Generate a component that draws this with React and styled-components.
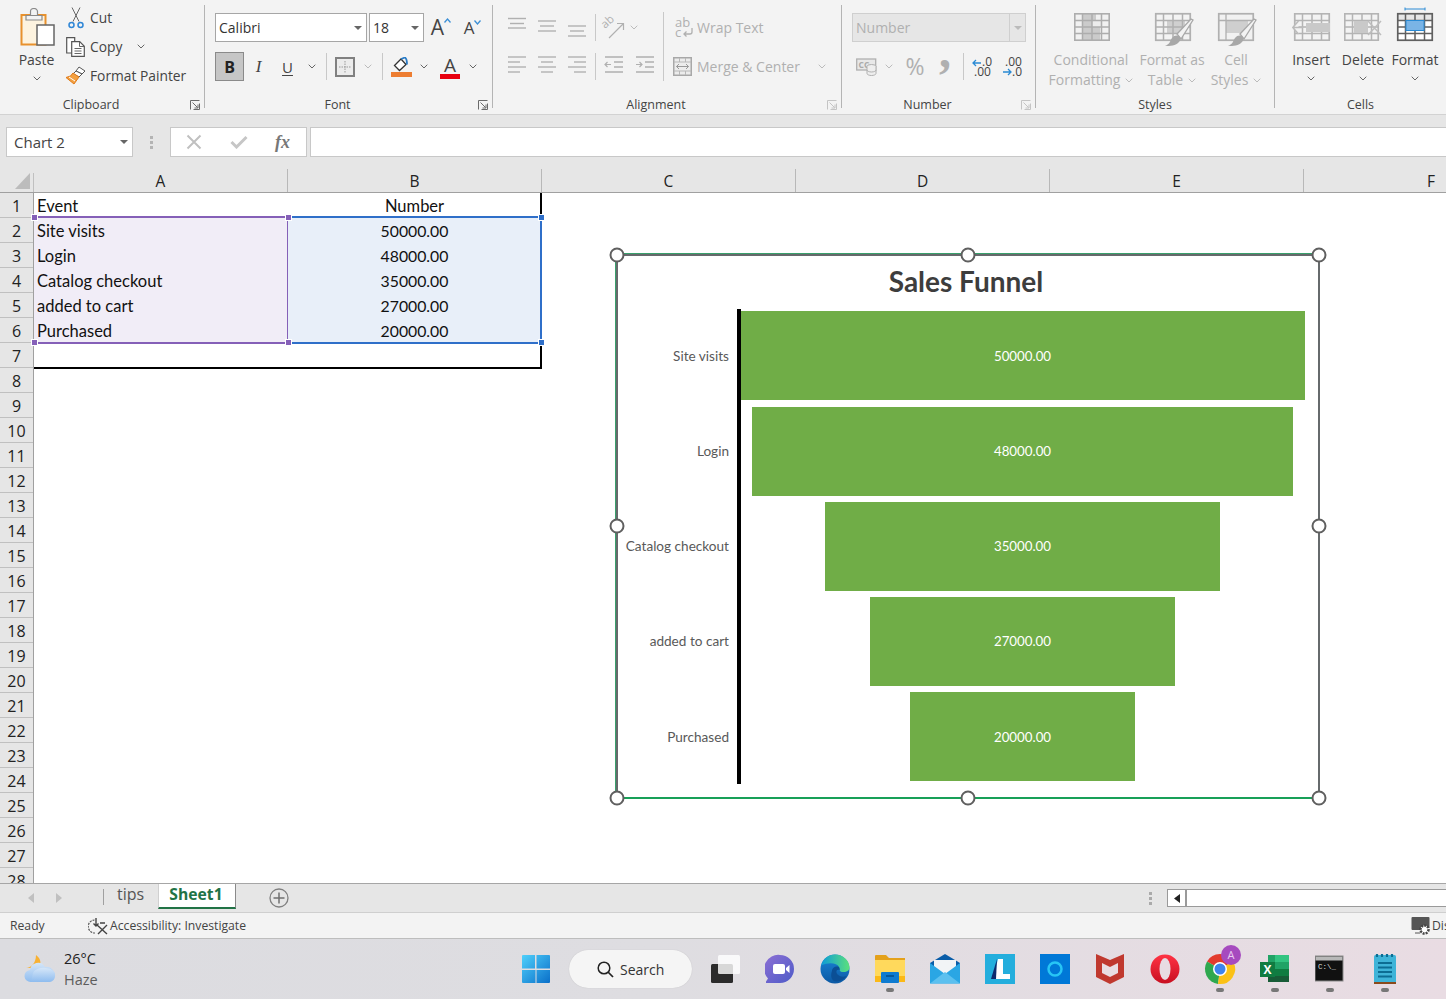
import React from "react";
import styled, { createGlobalStyle } from "styled-components";

const UI = `"Open Sans", "Noto Sans", "Liberation Sans", sans-serif`;
const CELL = `Lato, "Open Sans", "Liberation Sans", sans-serif`;
const OFF = "#b0b0b0";
const ON = "#444";

const Global = createGlobalStyle`
  html, body { margin: 0; padding: 0; background: #fff; }
  * { box-sizing: border-box; }
`;

const Page = styled.div`
  width: 1446px; height: 999px; overflow: hidden;
  display: flex; flex-direction: column; font-family: ${UI}; color: ${ON};
`;

/* ---------- ribbon ---------- */
const Ribbon = styled.div`
  height: 115px; flex: none; display: flex; background: #f3f3f3;
  border-bottom: 1px solid #d2d2d2;
`;
const Group = styled.section`
  width: ${p => p.$w}px; flex: none; display: flex; flex-direction: column;
`;
const GroupSep = styled.div`
  width: 1px; flex: none; margin: 5px 0 6px; background: #b4b4b4;
`;
const GroupBody = styled.div`
  height: 94px; display: flex; padding-left: ${p => p.$pl || 0}px;
`;
const GroupFooter = styled.div`
  height: 20px; display: flex; align-items: center; padding-right: ${p => (p.$flush ? 0 : 4)}px; padding-top: 1px;
`;
const GroupLabel = styled.div`
  flex: 1; text-align: center; font-size: 12.5px; line-height: 20px; color: #444;
`;
const LauncherBox = styled.div`
  width: 10px; height: 10px; margin-left: 8px; display: flex;
`;
const BigButton = styled.div`
  width: ${p => p.$w}px; flex: none; display: flex; flex-direction: column; align-items: center;
`;
const IconSlot = styled.div`
  height: 50px; padding-top: 4px; padding-left: ${p => p.$pl || 0}px; display: flex; align-items: center; justify-content: center;
`;
const BigLabel = styled.div`
  font-size: 14px; line-height: 20px; white-space: nowrap;
  color: ${p => (p.$off ? OFF : ON)};
  display: flex; align-items: center; gap: 5px;
`;
const ChevSlot = styled.div`
  height: 16px; display: flex; align-items: center;
`;
const SmallColumn = styled.div`
  margin-left: 12px; padding-top: 3px; display: flex; flex-direction: column;
`;
const SmallRow = styled.div`
  height: 29px; display: flex; align-items: center; font-size: 13.8px; white-space: nowrap;
`;
const SmallIcon = styled.div`
  width: 24px; flex: none; display: flex; justify-content: ${p => (p.$center ? "center" : "flex-start")};
  padding-right: ${p => (p.$center ? "4px" : 0)};
`;
const ChevGap = styled.div`
  margin-left: ${p => p.$ml}px; display: flex;
`;
const ToolStack = styled.div`
  padding-top: 13px; display: flex; flex-direction: column; gap: 10px;
  width: ${p => (p.$w ? `${p.$w}px` : "auto")}; flex: none;
`;
const ToolRow = styled.div`
  height: 29px; display: flex; align-items: center;
`;
const Tool = styled.div`
  width: ${p => p.$w}px; height: 29px; flex: none; display: flex; align-items: center; justify-content: center;
  color: ${p => (p.$off ? OFF : ON)};
`;
const Sep = styled.div`
  width: ${p => p.$w}px; height: 27px; flex: none; display: flex; justify-content: center;
  &::before { content: ""; width: 1px; background: #c8c8c8; }
`;
const TallSep = styled.div`
  width: 1px; height: 69px; margin-top: 12px; background: #c8c8c8; flex: none;
`;
const Select = styled.div`
  width: ${p => p.$w}px; height: 29px; flex: none; display: flex; align-items: center;
  background: ${p => (p.$off ? "#e6e6e6" : "#fff")};
  border: 1px solid ${p => (p.$off ? "#cfcfcf" : "#a6a6a6")};
  margin-left: ${p => p.$ml || 0}px; padding-left: 2px;
  font-size: 14px; color: ${p => (p.$off ? "#b0b0b0" : "#333")};
`;
const SelectText = styled.span` flex: 1; padding-left: 1px; `;
const CaretBox = styled.span`
  width: 16px; height: 100%; display: flex; align-items: center; justify-content: center;
  border-left: ${p => (p.$divided ? "1px solid #cfcfcf" : "0")};
`;
const BoldButton = styled(Tool)`
  background: #c6c6c6; border: 1px solid #8a8a8a; color: #222;
  font: 700 16px ${UI};
`;
const ItalicGlyph = styled.span` font: italic 400 17px "Liberation Serif", serif; color: #444; `;
const UnderGlyph = styled.span`
  font: 400 15px ${UI}; color: #444; text-decoration: underline; text-underline-offset: 2px;
`;
const SizeGlyph = styled.span`
  font-family: ${UI}; font-size: ${p => p.$s}px; line-height: 1; color: #444; position: relative;
`;
const MarkGlyph = styled.span`
  font-size: ${p => p.$s}px; line-height: 1; color: ${OFF}; font-family: ${UI};
`;
const CommaGlyph = styled.span`
  font: 700 48px/29px "Liberation Serif", serif; color: ${OFF}; height: 29px; transform: translateY(-16px);
`;
const TextTool = styled.div`
  height: 29px; display: flex; align-items: center; font-size: 14px; white-space: nowrap; color: ${OFF};
  padding-left: ${p => p.$pl}px; gap: ${p => p.$gap}px;
`;

/* ---------- formula bar ---------- */
const FormulaBar = styled.div`
  height: 50px; flex: none; background: #e6e6e6; padding: 12px 0 8px 6px; display: flex;
`;
const NameBox = styled.div`
  width: 127px; height: 30px; background: #fff; border: 1px solid #c8c8c8; display: flex; align-items: center;
  padding-left: 6px; font-size: 15px; color: #444; flex: none;
`;
const GripDots = styled.div`
  width: ${p => p.$w}px; flex: none; display: flex; flex-direction: column; align-items: center; justify-content: center; gap: 2px;
  & > i { width: 3px; height: 3px; background: ${p => p.$c || "#b4b4b4"}; display: block; }
`;
const FxBox = styled.div`
  width: 137px; height: 30px; background: #fff; border: 1px solid #c8c8c8; display: flex; align-items: center; flex: none;
`;
const FxSlot = styled.div`
  width: 45px; flex: none; display: flex; justify-content: center; align-items: center;
`;
const FxGlyph = styled.span`
  font: italic 700 18px "Liberation Serif", serif; color: #777; margin-left: -2px;
`;
const FormulaInput = styled.div`
  flex: 1; height: 30px; margin-left: 3px; background: #fff; border: 1px solid #c8c8c8; border-right: 0;
`;

/* ---------- sheet ---------- */
const ColHeaders = styled.div`
  height: 28px; flex: none; display: flex; background: #e6e6e6; border-bottom: 1px solid #a0a0a0; padding-top: 4px;
`;
const Corner = styled.div`
  width: 34px; flex: none; margin-top: 4px; padding: 0 0 0 15px; display: flex; align-items: flex-start;
  border-right: 1px solid #c0c0c0;
`;
const ColHead = styled.div`
  width: ${p => (p.$w ? `${p.$w}px` : "auto")}; flex: ${p => (p.$w ? "none" : 1)};
  height: 23px; text-align: center; line-height: 25px; font-size: 15.5px; color: #222;
  border-right: ${p => (p.$w ? "1px solid #b8b8b8" : 0)};
`;
const LastColHead = styled(ColHead)` text-align: left; padding-left: 123px; `;
const SheetBody = styled.div`
  flex: 1; min-height: 0; display: flex; position: relative; overflow: hidden; background: #fff;
`;
const RowHeads = styled.div`
  width: 34px; flex: none; background: #e6e6e6; border-right: 1px solid #a0a0a0;
`;
const RowHead = styled.div`
  height: 25px; text-align: center; line-height: 27px; font-size: 16px; color: #222;
  border-bottom: 1px solid #c0c0c0;
`;
const Cells = styled.div`
  flex: none; align-self: flex-start; display: grid; grid-template-columns: 254px 252px;
  grid-template-rows: 25px 125px 24px;
  border-right: 2px solid #000; border-bottom: 2px solid #000;
`;
const Cell = styled.div`
  height: 25px; line-height: 26px; font-family: ${CELL}; font-size: 16.5px; color: #111; white-space: nowrap;
  padding-left: 3px;
`;
const NumCell = styled(Cell)`
  padding-left: 1px; text-align: center; font-size: ${p => (p.$head ? "16.5px" : "15.8px")};
`;
const Range = styled.div`
  position: relative; margin: -2px ${p => (p.$c === "a" ? "-1px" : "-2px")} -1px 0;
  border: 2px solid ${p => (p.$c === "a" ? "#8560b8" : "#2f6fc9")};
  border-left-width: 0;
  background: ${p => (p.$c === "a" ? "#f1edf7" : "#e8eff9")};
`;
const RangeHandle = styled.i`
  position: absolute; width: 5px; height: 5px; display: block; z-index: 1;
  background: ${p => (p.$c === "a" ? "#8560b8" : "#2f6fc9")};
  ${p => (p.$top ? "top: -3px;" : "bottom: -3px;")}
  ${p => (p.$left ? "left: -2px;" : "right: -4px;")}
  outline: 1px solid #fff;
`;

/* ---------- chart ---------- */
const ChartFrame = styled.div`
  position: absolute; left: 616px; top: 61px; width: 704px; height: 545px; background: #fff;
  border: 2px solid #666a6c; border-bottom-color: #18a058;
  box-shadow: 0 -1px 0 #39a06c, -1px 0 0 #39a06c;
  display: flex; flex-direction: column;
`;
const ChartTitle = styled.div`
  height: 53px; line-height: 50px; text-align: center; padding-right: 4px; flex: none;
  font-family: ${CELL}; font-weight: 700; font-size: 28px; color: #3d3d3d;
`;
const Plot = styled.div` display: flex; `;
const AxisLabels = styled.div`
  width: 111px; margin-right: 8px; padding: 2.4px 0 3px; display: flex; flex-direction: column; gap: 6.2px; flex: none;
`;
const AxisLabel = styled.div`
  height: 89px; display: flex; align-items: center; justify-content: flex-end;
  font-family: ${CELL}; font-size: 13.6px; color: #595959; white-space: nowrap;
`;
const Bars = styled.div`
  width: 568px; border-left: 4px solid #000; padding: 2.4px 0 3px; display: flex; flex-direction: column; gap: 6.2px;
`;
const BarRow = styled.div`
  height: 89px; display: flex; justify-content: center; margin: 0 .5px 0 -.5px;
`;
const Bar = styled.div`
  height: 100%; background: #70ad47; display: flex; align-items: center; justify-content: center;
  font-family: ${CELL}; font-size: 13.3px; color: #fff;
`;
const Handle = styled.i`
  position: absolute; width: 15px; height: 15px; border-radius: 50%; background: #fff; border: 2px solid #5f5f5f;
  transform: translate(-50%, -50%); display: block;
  left: ${p => p.$x}px; top: ${p => p.$y}px;
`;

/* ---------- tabs + status ---------- */
const TabBar = styled.div`
  height: 29px; flex: none; background: #e6e6e6; border-top: 1px solid #a6a6a6; display: flex; align-items: flex-start;
`;
const TabNav = styled.div`
  width: 103px; flex: none; height: 28px; padding-left: 17px; display: flex; align-items: center;
`;
const NavSlot = styled.div` width: 28px; display: flex; justify-content: center; `;
const TipsTab = styled.div`
  width: 55px; flex: none; height: 16px; margin-top: 5px; border-left: 1px solid #a0a0a0; padding-right: 1px;
  text-align: center; font-size: 16px; line-height: 10px; color: #555;
`;
const ActiveTab = styled.div`
  width: 78px; height: 25px; flex: none; background: #fff; border-right: 1px solid #8a8a8a; border-left: 1px solid #d0d0d0;
  border-bottom: 2px solid #217346; text-align: center; font-size: 15.7px; font-weight: 700; color: #217346; line-height: 21px;
  padding-right: 2px;
`;
const AddSlot = styled.div`
  width: 86px; flex: none; height: 28px; display: flex; align-items: center; justify-content: center;
`;
const TabSpacer = styled.div` flex: 1; `;
const ScrollWrap = styled.div`
  display: flex; align-items: center; height: 28px; flex: none;
`;
const ScrollTrack = styled.div`
  width: 279px; height: 18px; background: #fff; border: 1px solid #9a9a9a; border-right: 0; display: flex;
`;
const ScrollBtn = styled.div`
  width: 19px; border-right: 2px solid #9a9a9a; display: flex; align-items: center; justify-content: center;
`;
const StatusBar = styled.div`
  height: 27px; flex: none; background: #f3f3f3; border-top: 1px solid #cfcfcf; border-bottom: 1px solid #bdbdbd;
  display: flex; align-items: center; padding-left: 10px; font-size: 12.2px; color: #444; white-space: nowrap;
`;
const StatusReady = styled.div` width: 78px; flex: none; `;
const StatusItem = styled.div` display: flex; align-items: center; gap: 2px; `;
const StatusRight = styled.div`
  margin-left: auto; display: flex; align-items: center; gap: 1px; width: 35px; flex: none;
  & > svg { flex: none; }
`;

/* ---------- taskbar ---------- */
const Taskbar = styled.div`
  height: 60px; flex: none; display: flex; align-items: center;
  background: linear-gradient(90deg, #dcdce0 0%, #dedde1 45%, #e9dce3 100%);
`;
const Weather = styled.div`
  width: 521px; flex: none; padding-left: 24px; display: flex; align-items: center; gap: 8px;
`;
const WeatherText = styled.div`
  font-size: 14.5px; line-height: 21px; color: #222;
  & > small { display: block; font-size: 14.5px; color: #5c5c5c; }
`;
const SearchPill = styled.div`
  width: 123px; height: 38px; margin: 0 5px 0 18px; border-radius: 19px; background: #f5f5f5; display: flex; align-items: center; gap: 6px;
  padding-left: 28px; font-size: 14px; color: #333; box-shadow: 0 0 1px rgba(0,0,0,.18); flex: none;
`;
const TaskSlot = styled.div`
  position: relative; width: 55px; height: 60px; flex: none; display: flex; align-items: center; justify-content: center;
`;
const RunDot = styled.i`
  position: absolute; left: 50%; bottom: 7px; width: 8px; height: 4px; margin-left: -4px; border-radius: 2px; background: #777; display: block;
`;
const FreeSvg = styled.svg` overflow: visible; display: block; `;

/* ---------- icon drawings ---------- */
const Chev = ({ c = "#666" }) => (
  <svg width="8" height="5" viewBox="0 0 8 5"><path d="M.7.7 4 4 7.3.7" fill="none" stroke={c} /></svg>
);
const Caret = ({ c = "#666" }) => (
  <svg width="8" height="4" viewBox="0 0 8 4"><path d="M0 0h8L4 4z" fill={c} /></svg>
);
const Launcher = ({ off }) => {
  const c = off ? "#c4c4c4" : "#6a6a6a";
  return (
    <LauncherBox>
      <svg width="10" height="10" viewBox="0 0 10 10">
        <path d="M.5 9.5V.5h9M9.5 3.5v6h-6" fill="none" stroke={c} />
        <path d="M2.5 2.5l5 5M8 4.5V8H4.5" fill="none" stroke={c} />
      </svg>
    </LauncherBox>
  );
};
const PasteIcon = () => (
  <svg width="36" height="38" viewBox="0 0 36 38">
    <rect x="2.5" y="7" width="24" height="29.5" fill="#fdf3df" stroke="#e8912d" strokeWidth="2" />
    <path d="M7 7.500h16V12H7zM11.500 7V3.500a3.500 3 0 0 1 7 0V7" fill="#f3f3f3" stroke="#8a8a8a" strokeWidth="1.200" />
    <rect x="18" y="17" width="17" height="20" fill="#fff" stroke="#666" strokeWidth="1.500" />
  </svg>
);
const CutIcon = () => (
  <svg width="16" height="22" viewBox="0 0 16 22">
    <path d="M4 .5l7 14M12 .5L5 14.5" stroke="#666" fill="none" />
    <circle cx="3.500" cy="18" r="2.500" fill="none" stroke="#2e86d6" strokeWidth="1.500" />
    <circle cx="12.500" cy="18" r="2.500" fill="none" stroke="#2e86d6" strokeWidth="1.500" />
  </svg>
);
const CopyIcon = () => (
  <svg width="20" height="20" viewBox="0 0 20 20">
    <path d="M7 16H.7V.7h8V4" fill="#fff" stroke="#555" strokeWidth="1.200" />
    <path d="M5.700 4.700h8l4.600 4.600v10H5.700z" fill="#fff" stroke="#555" strokeWidth="1.200" />
    <path d="M13.500 5v4.500H18M8.500 11.500h7M8.500 14h7M8.500 16.500h7" fill="none" stroke="#666" />
  </svg>
);
const PainterIcon = () => (
  <svg width="20" height="19" viewBox="0 0 20 19">
    <path d="M13 1l6 4-3 3-6-3z" fill="#fff" stroke="#555" />
    <path d="M10 5l6 3-3 3-6-3z" fill="#fff" stroke="#555" />
    <path d="M7 7l6 4-5 7-8-6.500 4.500-1.500z" fill="#f3a040" stroke="#e07b1a" />
    <path d="M3 11l6 4" stroke="#fff" />
  </svg>
);
const GrowCaret = ({ dir, c }) => (
  <svg width="7" height="5" viewBox="0 0 7 5">
    <path d={dir === "up" ? "M.5 4.500 3.500 1l3 3.500" : "M.5.5 3.500 4l3-3.500"} fill="none" stroke={c} strokeWidth="1.300" />
  </svg>
);
const CaretHolder = styled.span` position: absolute; left: 100%; top: 1px; display: flex; margin-left: 0; `;
const BordersIcon = () => (
  <svg width="20" height="20" viewBox="0 0 20 20">
    <rect x="1" y="1" width="18" height="18" fill="#ececec" stroke="#808080" strokeWidth="2" />
    <path d="M10 4v12M4 10h12" stroke="#999" strokeDasharray="1.500 1" />
  </svg>
);
const FillIcon = () => (
  <svg width="21" height="20" viewBox="0 0 21 20">
    <path d="M3.500 8.500 10 2l5 5.500-6.500 6z" fill="#fff" stroke="#333" strokeWidth="1.300" />
    <path d="M10 2l4-1.500c1.500 1 2 3.500 2 7" fill="none" stroke="#2a7cc7" strokeWidth="1.800" />
    <rect x="0" y="15" width="21" height="5" fill="#ed7d31" />
  </svg>
);
const ColorBar = styled.span`
  display: block; width: 20px; height: 5px; background: #e8000f; margin-top: -1px;
`;
const ColorWrap = styled.span`
  display: flex; flex-direction: column; align-items: center; font: 400 19px/20px ${UI}; color: #444;
`;
const AlignIcon = ({ lines }) => (
  <svg width="20" height="29" viewBox="0 0 20 29">
    {lines.map(([a, b, y], i) => (
      <path key={i} d={`M${a} ${y}H${b}`} stroke={OFF} strokeWidth="1.400" />
    ))}
  </svg>
);
const L4 = (w1, w2, mode) => [5, 10, 15, 20].map((y, i) => {
  const w = i % 2 ? w2 : w1;
  if (mode === "l") return [1, 1 + w, y];
  if (mode === "r") return [19 - w, 19, y];
  return [10 - w / 2, 10 + w / 2, y];
});
const OrientIcon = () => (
  <FreeSvg width="22" height="22" viewBox="0 0 22 22">
    <text fontSize="11.500" fill={OFF} fontFamily="Open Sans" transform="translate(2 12) rotate(-42)">ab</text>
    <path d="M6 21 20 7M14 6.500h6.500V13" fill="none" stroke={OFF} strokeWidth="1.200" />
  </FreeSvg>
);
const IndentIcon = ({ dir }) => (
  <svg width="20" height="29" viewBox="0 0 20 29">
    <path d="M1 5h18M1 20h18M10 10h9M10 15h9" stroke={OFF} strokeWidth="1.400" />
    <path d={dir === "in" ? "M1 12.500h6M4.500 10l2.500 2.500-2.500 2.500" : "M7 12.500H1M3.500 10 1 12.500 3.500 15"} fill="none" stroke={OFF} strokeWidth="1.200" />
  </svg>
);
const WrapIcon = () => (
  <FreeSvg width="18" height="22" viewBox="0 0 18 22">
    <text x="0" y="10" fontSize="13" fill={OFF} fontFamily="Open Sans">ab</text>
    <text x="0" y="20" fontSize="13" fill={OFF} fontFamily="Open Sans">c</text>
    <path d="M17 11v4a2 2 0 0 1-2 2H9M11.500 14.500 9 17l2.500 2.500" fill="none" stroke={OFF} strokeWidth="1.300" />
  </FreeSvg>
);
const MergeIcon = () => (
  <svg width="19" height="19" viewBox="0 0 19 19">
    <rect x=".75" y=".75" width="17.500" height="17.500" fill="#ececec" stroke="#a8a8a8" strokeWidth="1.500" />
    <path d="M6.500 1v4M12.500 1v4M6.500 14v4M12.500 14v4M1 5h17M1 14h17" stroke="#b8b8b8" />
    <path d="M3.500 9.500h12M6 7 3.500 9.500 6 12M13 7l2.500 2.500L13 12" fill="none" stroke="#999" />
  </svg>
);
const CurrencyIcon = () => (
  <FreeSvg width="21" height="18" viewBox="0 0 21 18">
    <rect x=".7" y="1" width="19" height="11" fill="#e8e8e8" stroke={OFF} strokeWidth="1.300" />
    <text x="2.500" y="10" fontSize="8.500" fontWeight="700" fill="#aaa" fontFamily="Open Sans">CC</text>
    <ellipse cx="15.500" cy="8.500" rx="4.500" ry="2" fill="#eee" stroke={OFF} />
    <path d="M11 8.500v7c0 1 2 2 4.500 2s4.500-1 4.500-2v-7M11 12c0 1 2 2 4.500 2s4.500-1 4.500-2" fill="#eee" stroke={OFF} />
  </FreeSvg>
);
const DecimalIcon = ({ inc }) => (
  <FreeSvg width="22" height="20" viewBox="0 0 22 20">
    {inc ? (
      <g>
        <path d="M9 6H1M4 3 1 6l3 3" fill="none" stroke="#2a8ad4" strokeWidth="1.300" />
        <text x="10" y="9" fontSize="12" fill="#444" fontFamily="Open Sans">.0</text>
        <text x="2" y="19" fontSize="12" fill="#444" fontFamily="Open Sans">.00</text>
      </g>
    ) : (
      <g>
        <text x="3" y="9" fontSize="12" fill="#444" fontFamily="Open Sans">.00</text>
        <path d="M1 15h8M6 12l3 3-3 3" fill="none" stroke="#2a8ad4" strokeWidth="1.300" />
        <text x="10" y="19" fontSize="12" fill="#444" fontFamily="Open Sans">.0</text>
      </g>
    )}
  </FreeSvg>
);
const GridFrame = ({ c, w = 36, h = 28 }) => (
  <g fill="none" stroke={c} strokeWidth="1.500">
    <rect x=".75" y=".75" width={w - 1.5} height={h - 1.5} strokeWidth="1.700" />
    <path d={`M1 7.500H${w - 1}M1 14H${w - 1}M1 20.500H${w - 1}M8.500 1V${h - 1}M18 1V${h - 1}M27.500 1V${h - 1}`} />
  </g>
);
const Brush = ({ c = "#a8a8a8" }) => (
  <g>
    <path d="M22 21 36 6l2 1-12 19z" fill="#f3f3f3" stroke={c} strokeWidth="1.300" />
    <path d="M10 33c5 0 11 0 14-4 2-2 2-4 0-6-2-1-5-1-7 2-2 3-2 6-7 8z" fill={c} />
  </g>
);
const CondIcon = () => (
  <svg width="36" height="28" viewBox="0 0 36 28">
    <rect x="1" y="1" width="34" height="26" fill="#f1f1f1" />
    <path d="M8 1h14v6.500H8zM8 7.500h10V14H8zM8 14h18v6.500H8zM8 20.500h18V27H8z" fill="#cbcbcb" />
    <path d="M18 7.500h9.500V14H18z" fill="#ececec" />
    <GridFrame c="#adadad" />
  </svg>
);
const TableStyleIcon = () => (
  <FreeSvg width="36" height="28" viewBox="0 0 36 28">
    <path d="M12 7.500h18V20H12z" fill="#cfcfcf" />
    <GridFrame c="#b0b0b0" />
    <Brush />
  </FreeSvg>
);
const CellStyleIcon = () => (
  <FreeSvg width="36" height="28" viewBox="0 0 36 28">
    <rect x="1" y="1" width="34" height="26" fill="#f1f1f1" />
    <path d="M8 7.500h22V20H8z" fill="#cfcfcf" />
    <rect x=".75" y=".75" width="34.500" height="26.500" fill="none" stroke="#b0b0b0" strokeWidth="1.700" />
    <path d="M1 7.500h34M8 1v26" stroke="#b0b0b0" strokeWidth="1.300" fill="none" />
    <Brush />
  </FreeSvg>
);
const InsertIcon = () => (
  <svg width="39" height="28" viewBox="0 0 39 28">
    <g transform="translate(2 0)"><GridFrame c="#b4b4b4" /></g>
    <path d="M14 10h24v9H14z" fill="#c9c9c9" />
    <path d="M11 14.500H1M6.500 8 .8 14.500 6.500 21" fill="#f3f3f3" stroke="#bbb" strokeWidth="1.500" />
  </svg>
);
const DeleteIcon = () => (
  <svg width="38" height="28" viewBox="0 0 38 28">
    <GridFrame c="#b4b4b4" w={35} />
    <path d="M10 8h14v12H10z" fill="#c9c9c9" />
    <path d="M24 8l13 14M37 8 24 22" stroke="#bdbdbd" strokeWidth="1.500" fill="none" />
  </svg>
);
const FormatIcon = () => (
  <FreeSvg width="36" height="28" viewBox="0 0 36 28">
    <path d="M8 -4h20M8 -5.500v3M28 -5.500v3" stroke="#2a8ad4" fill="none" />
    <rect x="1" y="1" width="34" height="26" fill="#fff" />
    <path d="M1 1h34v6.500H1z" fill="#e6e6e6" />
    <GridFrame c="#606060" />
    <rect x="9" y="7.500" width="18" height="10" fill="#7ab4e6" stroke="#2a8ad4" />
  </FreeSvg>
);
const CrossIcon = () => (
  <svg width="16" height="16" viewBox="0 0 16 16"><path d="M1.500 1.500l13 13M14.500 1.500l-13 13" stroke="#c0c0c0" strokeWidth="2" /></svg>
);
const CheckIcon = () => (
  <svg width="18" height="14" viewBox="0 0 18 14"><path d="M1.500 7 6.500 12 16.500 2" fill="none" stroke="#c6c6c6" strokeWidth="3" /></svg>
);
const CornerIcon = () => (
  <svg width="15" height="16" viewBox="0 0 15 16"><path d="M15 0v16H0z" fill="#bcbcbc" /></svg>
);
const NavArrow = ({ left }) => (
  <svg width="6" height="10" viewBox="0 0 6 10"><path d={left ? "M6 0v10L0 5z" : "M0 0v10l6-5z"} fill="#c0c0c0" /></svg>
);
const PlusCircle = () => (
  <svg width="20" height="20" viewBox="0 0 20 20">
    <circle cx="10" cy="10" r="9" fill="none" stroke="#808080" strokeWidth="1.300" />
    <path d="M10 4.500v11M4.500 10h11" stroke="#707070" strokeWidth="1.500" />
  </svg>
);
const A11yIcon = () => (
  <svg width="20" height="18" viewBox="0 0 20 18">
    <path d="M6.500 3A6.500 6.500 0 0 0 7 16" fill="none" stroke="#555" strokeDasharray="2 1" strokeWidth="1.200" />
    <path d="M8 1v8M5.500 6.500 8 9l2.500-2.500M9 8l10 9M19 8 10 17M12 6h5" stroke="#444" strokeWidth="1.400" fill="none" />
  </svg>
);
const DisplayIcon = () => (
  <svg width="20" height="20" viewBox="0 0 20 20">
    <path d="M1.500 1h16a1 1 0 0 1 1 1v10H10v2H1.500a1 1 0 0 1-1-1V2a1 1 0 0 1 1-1z" fill="#555" />
    <circle cx="13.500" cy="13.500" r="4" fill="#fff" stroke="#444" strokeWidth="2.500" strokeDasharray="2 1" />
    <path d="M4 17h5" stroke="#555" />
  </svg>
);
const WeatherIcon = () => (
  <svg width="32" height="30" viewBox="0 0 32 30">
    <defs>
      <linearGradient id="cl" x1="0" y1="0" x2="0" y2="1"><stop offset="0" stopColor="#d5e6f8" /><stop offset="1" stopColor="#8ebcef" /></linearGradient>
    </defs>
    <path d="M12 1c4 3 6 7 3 13H2c5 0 10-5 10-13z" fill="#f8b133" />
    <path d="M7 28a6 6 0 0 1-1-12 8 8 0 0 1 15-3 6.500 7 0 0 1 4 15z" fill="url(#cl)" />
    <path d="M9 19a9 5 0 0 1 22 2 6 6 0 0 1-6 7H7z" fill="url(#cl)" />
  </svg>
);
const WinIcon = () => (
  <svg width="30" height="30" viewBox="0 0 30 30">
    <defs>
      <linearGradient id="w" x1="0" y1="0" x2="1" y2="1"><stop offset="0" stopColor="#4fd0fb" /><stop offset="1" stopColor="#0a6fc9" /></linearGradient>
    </defs>
    <path d="M1 2a1 1 0 0 1 1-1h12v13.500H1zM15.500 1H28a1 1 0 0 1 1 1v12.500H15.500zM1 16h13.500v13H2a1 1 0 0 1-1-1zM15.500 16H29v12a1 1 0 0 1-1 1H15.500z" fill="url(#w)" />
  </svg>
);
const SearchIcon = () => (
  <svg width="17" height="17" viewBox="0 0 17 17"><circle cx="7" cy="7" r="5.800" fill="none" stroke="#222" strokeWidth="1.500" /><path d="M11 11l5 5" stroke="#222" strokeWidth="1.700" /></svg>
);
const TaskViewIcon = () => (
  <svg width="30" height="30" viewBox="0 0 30 30">
    <rect x="1" y="10" width="22" height="19" rx="1.500" fill="#2b2b2b" />
    <rect x="8" y="1" width="22" height="19" rx="1.500" fill="#fff" fillOpacity=".82" />
  </svg>
);
const MeetIcon = () => (
  <svg width="30" height="30" viewBox="0 0 30 30">
    <defs><linearGradient id="mt" x1="0" y1="0" x2="1" y2="1"><stop offset="0" stopColor="#8c6fd4" /><stop offset="1" stopColor="#4e5bc8" /></linearGradient></defs>
    <path d="M15 1a14 14 0 0 1 0 28H1v-1.500l2-3A14 14 0 0 1 15 1z" fill="url(#mt)" />
    <rect x="8" y="10" width="12" height="10" rx="2" fill="#fff" />
    <path d="M21 14l3.500-3v8L21 16z" fill="#fff" />
  </svg>
);
const EdgeIcon = () => (
  <svg width="30" height="30" viewBox="0 0 30 30">
    <defs>
      <linearGradient id="e1" x1="0" y1="0" x2="1" y2="0"><stop offset="0" stopColor="#0d9bd8" /><stop offset="1" stopColor="#5be07c" /></linearGradient>
      <linearGradient id="e2" x1="0" y1="0" x2="0" y2="1"><stop offset="0" stopColor="#1b86d8" /><stop offset="1" stopColor="#0c59a4" /></linearGradient>
    </defs>
    <circle cx="15" cy="15" r="14.500" fill="url(#e2)" />
    <path d="M1 12C3 4 9 .500 15 .500c8 0 14.500 6 14.500 13 0 3-3 5-7.500 4.500-3-.5-2-3-3-5-2-4-10-5-18-1.500z" fill="url(#e1)" />
    <path d="M12 17c0-3 3-5 6-4.500 1.500.3 1.500 2 1.800 3.500-3-1-4 1-3 3.500 1.500 3 6 4 10 2.500-3 4-8 6.500-13 5-3-2-3-7-1.800-10z" fill="#0b4f95" />
  </svg>
);
const FolderIcon = () => (
  <svg width="30" height="30" viewBox="0 0 30 30">
    <path d="M0 2a1 1 0 0 1 1-1h10l3 3h16v6H0z" fill="#e4a11b" />
    <path d="M0 6h30v22H0z" fill="#ffd95c" />
    <path d="M0 22h30v6H0z" fill="#fbb917" />
    <rect x="6" y="18" width="18" height="11" rx="1" fill="#0f7bd0" />
    <path d="M11 22h8" stroke="#054d8a" strokeWidth="1.500" />
  </svg>
);
const MailIcon = () => (
  <svg width="30" height="30" viewBox="0 0 30 30">
    <path d="M0 9 15 0l15 9v5H0z" fill="#0a5da8" />
    <path d="M4 6h22v14H4z" fill="#f2f4f6" />
    <path d="M0 9l15 11L30 9v20.500H0z" fill="#2aa6e4" />
    <path d="M0 29.500 15 18l15 11.500z" fill="#5cc0ef" />
  </svg>
);
const LIcon = () => (
  <svg width="30" height="30" viewBox="0 0 30 30">
    <rect width="30" height="30" fill="#24aedd" />
    <path d="M13 5h5v15h7v5H8z" fill="#fff" />
    <path d="M12 5 6 25h5z" fill="#0d2a6e" />
  </svg>
);
const AlexaIcon = () => (
  <svg width="30" height="30" viewBox="0 0 30 30">
    <rect width="30" height="30" fill="#0078d7" />
    <circle cx="15" cy="15" r="6.500" fill="none" stroke="#27c5f5" strokeWidth="2.500" />
  </svg>
);
const McAfeeIcon = () => (
  <svg width="28" height="30" viewBox="0 0 28 30">
    <path d="M0 0l14 6 14-6v23L14 30 0 23z" fill="#c0392f" />
    <path d="M6 9l8 4 8-4v10l-8 4-8-4z" fill="#e9dfe3" />
  </svg>
);
const OperaIcon = () => (
  <svg width="30" height="30" viewBox="0 0 30 30">
    <defs><linearGradient id="op" x1="0" y1="0" x2="0" y2="1"><stop offset="0" stopColor="#ff3344" /><stop offset="1" stopColor="#c80f20" /></linearGradient></defs>
    <circle cx="15" cy="15" r="14.500" fill="url(#op)" />
    <ellipse cx="15" cy="15" rx="5.500" ry="11" fill="#e8dce2" />
  </svg>
);
const ChromeIcon = () => (
  <FreeSvg width="30" height="30" viewBox="0 0 30 30">
    <path d="M15 15 2 7.500A15 15 0 0 1 28 7.500z" fill="#e33b2e" />
    <path d="M15 15 2 7.500A15 15 0 0 0 13 29.900z" fill="#2fa84f" />
    <path d="M15 15 28 7.500A15 15 0 0 1 13 29.900z" fill="#fbc116" />
    <circle cx="15" cy="15" r="7" fill="#fff" />
    <circle cx="15" cy="15" r="5.500" fill="#3d84ee" />
    <circle cx="26" cy="1" r="10" fill="#a64abf" />
    <text x="26" y="5" fontSize="11" fontFamily="Open Sans" textAnchor="middle" fill="#e9cdf0">A</text>
  </FreeSvg>
);
const ExcelIcon = () => (
  <svg width="30" height="30" viewBox="0 0 30 30">
    <path d="M8 1h7v7H8z" fill="#21a366" /><path d="M15 1h14v7H15z" fill="#33c481" />
    <path d="M8 8h7v7H8z" fill="#107c41" /><path d="M15 8h14v7H15z" fill="#21a366" />
    <path d="M8 15h7v7H8z" fill="#185c37" /><path d="M15 15h14v7H15z" fill="#107c41" />
    <path d="M8 22h21v6H8z" fill="#185c37" />
    <rect x="0" y="8" width="15" height="15" fill="#107c41" />
    <text x="7.500" y="20" fontSize="12" fontWeight="700" fontFamily="Open Sans" textAnchor="middle" fill="#fff">X</text>
  </svg>
);
const CmdIcon = () => (
  <svg width="30" height="30" viewBox="0 0 30 30">
    <rect y="2" width="28" height="25" fill="#111" stroke="#8a8a8a" />
    <rect x=".5" y="2.500" width="27" height="4" fill="#b8b8b8" />
    <text x="3" y="15" fontSize="7.500" fontFamily="Liberation Mono" fill="#ddd">C:\_</text>
  </svg>
);
const NotepadIcon = () => (
  <svg width="24" height="32" viewBox="0 0 24 32">
    <rect x="1" y="2" width="22" height="28" rx="1.500" fill="#3fb4d8" />
    <path d="M1 29h22v2H1z" fill="#8b4a1c" />
    <path d="M5 10h14M5 14.500h14M5 19h14M5 23.500h14" stroke="#0c6d93" strokeWidth="1.800" />
    <path d="M4 1v3M9 1v3M14 1v3M19 1v3" stroke="#0c6d93" strokeWidth="2.200" />
  </svg>
);

/* ---------- data ---------- */
const FUNNEL = [
  { name: "Site visits", value: 50000 },
  { name: "Login", value: 48000 },
  { name: "Catalog checkout", value: 35000 },
  { name: "added to cart", value: 27000 },
  { name: "Purchased", value: 20000 },
];
const MAX = 50000;
const HANDLES = [
  [-1, -1], [350, -1], [701, -1],
  [-1, 270], [701, 270],
  [-1, 542], [350, 542], [701, 542],
];
const ROWS = Array.from({ length: 28 }, (_, i) => i + 1);
const TASK = [
  [TaskViewIcon, false], [MeetIcon, false], [EdgeIcon, false], [FolderIcon, true], [MailIcon, false], [LIcon, false],
  [AlexaIcon, false], [McAfeeIcon, false], [OperaIcon, false], [ChromeIcon, true], [ExcelIcon, true], [CmdIcon, true], [NotepadIcon, true],
];

const RibbonBar = () => (
  <Ribbon>
    <Group $w={204}>
      <GroupBody $pl={19}>
        <BigButton $w={35}>
          <IconSlot><PasteIcon /></IconSlot>
          <BigLabel>Paste</BigLabel>
          <ChevSlot><Chev /></ChevSlot>
        </BigButton>
        <SmallColumn>
          <SmallRow><SmallIcon $center><CutIcon /></SmallIcon>Cut</SmallRow>
          <SmallRow><SmallIcon><CopyIcon /></SmallIcon>Copy<ChevGap $ml={15}><Chev /></ChevGap></SmallRow>
          <SmallRow><SmallIcon><PainterIcon /></SmallIcon>Format Painter</SmallRow>
        </SmallColumn>
      </GroupBody>
      <GroupFooter><GroupLabel>Clipboard</GroupLabel><Launcher /></GroupFooter>
    </Group>
    <GroupSep />
    <Group $w={287}>
      <GroupBody $pl={10}>
        <ToolStack>
          <ToolRow>
            <Select $w={152}><SelectText>Calibri</SelectText><CaretBox><Caret /></CaretBox></Select>
            <Select $w={55} $ml={2}><SelectText>18</SelectText><CaretBox><Caret /></CaretBox></Select>
            <Tool $w={27}><SizeGlyph $s={21}>A<CaretHolder><GrowCaret dir="up" c="#3b8fd6" /></CaretHolder></SizeGlyph></Tool>
            <Tool $w={36}><SizeGlyph $s={17}>A<CaretHolder><GrowCaret dir="down" c="#3b8fd6" /></CaretHolder></SizeGlyph></Tool>
          </ToolRow>
          <ToolRow>
            <BoldButton $w={29}>B</BoldButton>
            <Tool $w={29}><ItalicGlyph>I</ItalicGlyph></Tool>
            <Tool $w={29}><UnderGlyph>U</UnderGlyph></Tool>
            <Tool $w={20}><Chev /></Tool>
            <Sep $w={8} />
            <Tool $w={29}><BordersIcon /></Tool>
            <Tool $w={18}><Chev c="#bbb" /></Tool>
            <Sep $w={10} />
            <Tool $w={28}><FillIcon /></Tool>
            <Tool $w={18}><Chev /></Tool>
            <Tool $w={34}><ColorWrap>A<ColorBar /></ColorWrap></Tool>
            <Tool $w={12}><Chev /></Tool>
          </ToolRow>
        </ToolStack>
      </GroupBody>
      <GroupFooter><GroupLabel>Font</GroupLabel><Launcher /></GroupFooter>
    </Group>
    <GroupSep />
    <Group $w={348}>
      <GroupBody $pl={9}>
        <ToolStack $w={161}>
          <ToolRow>
            <Tool $w={30}><AlignIcon lines={[[1, 19, 5.5], [3, 17, 10.5], [1, 19, 15]]} /></Tool>
            <Tool $w={30}><AlignIcon lines={[[1, 19, 8], [3, 17, 13], [1, 19, 18]]} /></Tool>
            <Tool $w={30}><AlignIcon lines={[[1, 19, 13], [3, 17, 18], [1, 19, 23]]} /></Tool>
            <Sep $w={6} />
            <Tool $w={32}><OrientIcon /></Tool>
            <Tool $w={8}><Chev c="#bbb" /></Tool>
          </ToolRow>
          <ToolRow>
            <Tool $w={30}><AlignIcon lines={L4(18, 12, "l")} /></Tool>
            <Tool $w={30}><AlignIcon lines={L4(18, 12, "c")} /></Tool>
            <Tool $w={30}><AlignIcon lines={L4(18, 12, "r")} /></Tool>
            <Sep $w={6} />
            <Tool $w={32}><IndentIcon dir="out" /></Tool>
            <Tool $w={30}><IndentIcon dir="in" /></Tool>
          </ToolRow>
        </ToolStack>
        <TallSep />
        <ToolStack>
          <TextTool $pl={11} $gap={4}><WrapIcon />Wrap Text</TextTool>
          <TextTool $pl={9} $gap={5}><MergeIcon />Merge &amp; Center<ChevGap $ml={13}><Chev c="#bbb" /></ChevGap></TextTool>
        </ToolStack>
      </GroupBody>
      <GroupFooter><GroupLabel>Alignment</GroupLabel><Launcher off /></GroupFooter>
    </Group>
    <GroupSep />
    <Group $w={193}>
      <GroupBody $pl={10}>
        <ToolStack>
          <ToolRow>
            <Select $w={174} $off><SelectText>Number</SelectText><CaretBox $divided><Caret c="#bbb" /></CaretBox></Select>
          </ToolRow>
          <ToolRow>
            <Tool $w={28}><CurrencyIcon /></Tool>
            <Tool $w={18}><Chev c="#bbb" /></Tool>
            <Tool $w={34}><MarkGlyph $s={23}>%</MarkGlyph></Tool>
            <Tool $w={26}><CommaGlyph>,</CommaGlyph></Tool>
            <Sep $w={10} />
            <Tool $w={30}><DecimalIcon inc /></Tool>
            <Tool $w={30}><DecimalIcon /></Tool>
          </ToolRow>
        </ToolStack>
      </GroupBody>
      <GroupFooter><GroupLabel>Number</GroupLabel><Launcher off /></GroupFooter>
    </Group>
    <GroupSep />
    <Group $w={238}>
      <GroupBody $pl={10}>
        <BigButton $w={90}>
          <IconSlot $pl={2}><CondIcon /></IconSlot>
          <BigLabel $off>Conditional</BigLabel>
          <BigLabel $off>Formatting <Chev c="#bbb" /></BigLabel>
        </BigButton>
        <BigButton $w={72}>
          <IconSlot $pl={2}><TableStyleIcon /></IconSlot>
          <BigLabel $off>Format as</BigLabel>
          <BigLabel $off>Table <Chev c="#bbb" /></BigLabel>
        </BigButton>
        <BigButton $w={56}>
          <IconSlot><CellStyleIcon /></IconSlot>
          <BigLabel $off>Cell</BigLabel>
          <BigLabel $off>Styles <Chev c="#bbb" /></BigLabel>
        </BigButton>
      </GroupBody>
      <GroupFooter $flush><GroupLabel>Styles</GroupLabel></GroupFooter>
    </Group>
    <GroupSep />
    <Group $w={171}>
      <GroupBody $pl={10}>
        <BigButton $w={52}>
          <IconSlot><InsertIcon /></IconSlot>
          <BigLabel>Insert</BigLabel>
          <ChevSlot><Chev /></ChevSlot>
        </BigButton>
        <BigButton $w={52}>
          <IconSlot><DeleteIcon /></IconSlot>
          <BigLabel>Delete</BigLabel>
          <ChevSlot><Chev /></ChevSlot>
        </BigButton>
        <BigButton $w={52}>
          <IconSlot><FormatIcon /></IconSlot>
          <BigLabel>Format</BigLabel>
          <ChevSlot><Chev /></ChevSlot>
        </BigButton>
      </GroupBody>
      <GroupFooter $flush><GroupLabel>Cells</GroupLabel></GroupFooter>
    </Group>
  </Ribbon>
);

const Chart = () => (
  <ChartFrame>
    <ChartTitle>Sales Funnel</ChartTitle>
    <Plot>
      <AxisLabels>
        {FUNNEL.map(d => <AxisLabel key={d.name}>{d.name}</AxisLabel>)}
      </AxisLabels>
      <Bars>
        {FUNNEL.map(d => (
          <BarRow key={d.name}>
            <Bar style={{ width: `${(d.value / MAX) * 100}%` }}>{d.value.toFixed(2)}</Bar>
          </BarRow>
        ))}
      </Bars>
    </Plot>
    {HANDLES.map(([x, y]) => <Handle key={`${x}-${y}`} $x={x} $y={y} />)}
  </ChartFrame>
);

export default function App() {
  return (
    <Page>
      <Global />
      <RibbonBar />
      <FormulaBar>
        <NameBox>
          <SelectText>Chart 2</SelectText>
          <CaretBox><Caret /></CaretBox>
        </NameBox>
        <GripDots $w={37}><i /><i /><i /></GripDots>
        <FxBox>
          <FxSlot><CrossIcon /></FxSlot>
          <FxSlot><CheckIcon /></FxSlot>
          <FxSlot><FxGlyph>fx</FxGlyph></FxSlot>
        </FxBox>
        <FormulaInput />
      </FormulaBar>
      <ColHeaders>
        <Corner><CornerIcon /></Corner>
        <ColHead $w={254}>A</ColHead>
        <ColHead $w={254}>B</ColHead>
        <ColHead $w={254}>C</ColHead>
        <ColHead $w={254}>D</ColHead>
        <ColHead $w={254}>E</ColHead>
        <LastColHead>F</LastColHead>
      </ColHeaders>
      <SheetBody>
        <RowHeads>
          {ROWS.map(n => <RowHead key={n}>{n}</RowHead>)}
        </RowHeads>
        <Cells>
          <Cell>Event</Cell>
          <NumCell $head>Number</NumCell>
          <Range $c="a">
            {FUNNEL.map(d => <Cell key={d.name}>{d.name}</Cell>)}
            <RangeHandle $c="a" $top $left />
            <RangeHandle $c="a" $top />
            <RangeHandle $c="a" $left />
            <RangeHandle $c="a" />
          </Range>
          <Range $c="b">
            {FUNNEL.map(d => <NumCell key={d.name}>{d.value.toFixed(2)}</NumCell>)}
            <RangeHandle $c="b" $top />
            <RangeHandle $c="b" />
          </Range>
        </Cells>
        <Chart />
      </SheetBody>
      <TabBar>
        <TabNav>
          <NavSlot><NavArrow left /></NavSlot>
          <NavSlot><NavArrow /></NavSlot>
        </TabNav>
        <TipsTab>tips</TipsTab>
        <ActiveTab>Sheet1</ActiveTab>
        <AddSlot><PlusCircle /></AddSlot>
        <TabSpacer />
        <ScrollWrap>
          <GripDots $w={33} $c="#aaa"><i /><i /><i /></GripDots>
          <ScrollTrack>
            <ScrollBtn>
              <svg width="6" height="9" viewBox="0 0 6 9"><path d="M6 0v9L0 4.500z" fill="#222" /></svg>
            </ScrollBtn>
          </ScrollTrack>
        </ScrollWrap>
      </TabBar>
      <StatusBar>
        <StatusReady>Ready</StatusReady>
        <StatusItem><A11yIcon />Accessibility: Investigate</StatusItem>
        <StatusRight><DisplayIcon />Dis</StatusRight>
      </StatusBar>
      <Taskbar>
        <Weather>
          <WeatherIcon />
          <WeatherText>26°C<small>Haze</small></WeatherText>
        </Weather>
        <WinIcon />
        <SearchPill><SearchIcon />Search</SearchPill>
        {TASK.map(([Icon, running], i) => (
          <TaskSlot key={i}>
            <Icon />
            {running && <RunDot />}
          </TaskSlot>
        ))}
      </Taskbar>
    </Page>
  );
}
